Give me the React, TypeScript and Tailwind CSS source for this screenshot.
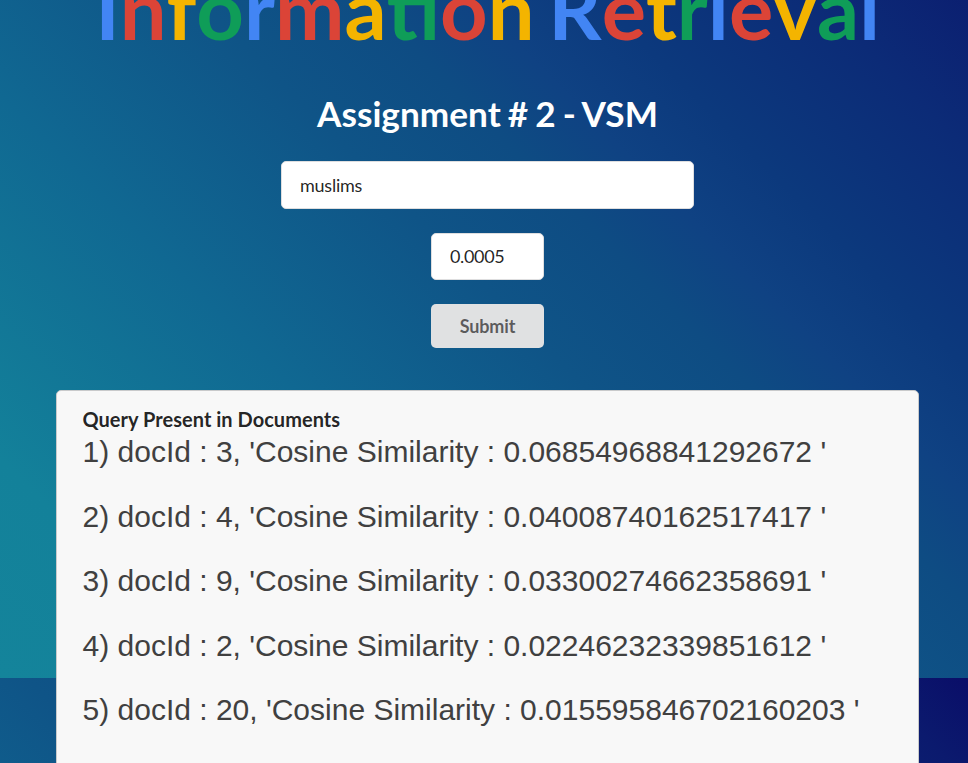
const TITLE = ["Information", "Retrieval"];
const COLORS = ["text-[#4285f4]", "text-[#db4437]", "text-[#f4b400]", "text-[#0f9d58]"];

const RESULTS = [
  { id: 3, score: "0.06854968841292672" },
  { id: 4, score: "0.04008740162517417" },
  { id: 9, score: "0.03300274662358691" },
  { id: 2, score: "0.02246232339851612" },
  { id: 20, score: "0.015595846702160203" },
];

function Title() {
  return (
    <h1 className="-mt-[52px] h-[120px] whitespace-nowrap text-center text-[83px] font-bold leading-[120px] [font-kerning:none] [word-spacing:-6.5px]">
      {TITLE.map((word, w) => (
        <span key={word}>
          {w > 0 && " "}
          {word.split("").map((c, i) => (
            <span key={i} className={COLORS[i % 4]}>{c}</span>
          ))}
        </span>
      ))}
    </h1>
  );
}

export default function App() {
  return (
    <div className="h-[763px] w-[968px] overflow-hidden bg-[linear-gradient(45deg,#14849b_0%,#13819a_12%,#106892_32%,#0f5487_48%,#0e4c83_57%,#0f4283_63%,#0c397d_70%,#0c2b77_82%,#0b1a6e_94%,#0a0d68_100%)] bg-[length:975px_850px] bg-[position:0_-172px] font-[Lato,sans-serif]">
      <div className="flex w-[975px] flex-col items-center">
        <Title />
        <h2 className="mt-[20px] h-[50px] text-[35.2px] font-bold leading-[50px] text-white [word-spacing:-1.5px]">Assignment # 2 - VSM</h2>
        <input
          className="mt-[23px] h-[48px] w-[413px] rounded-[5px] border border-[#dededf] bg-white px-[18px] text-[18px] tracking-[-0.25px] text-black/87 outline-none"
          defaultValue="muslims"
        />
        <input
          className="mt-[24px] h-[47px] w-[113px] rounded-[5px] border border-[#dededf] bg-white px-[18px] pb-px text-[18px] tracking-[-0.35px] text-black/87 outline-none"
          defaultValue="0.0005"
        />
        <button className="mt-[24px] h-[44px] w-[113px] rounded-[5px] bg-[#e0e1e2] pt-px text-[18px] font-bold tracking-[-0.15px] text-black/60">
          Submit
        </button>
        <section className="mt-[42px] h-[500px] w-[863px] rounded-[5px] border border-[#c9cacb] bg-[#f8f8f8] pl-[25.5px] pt-[15px]">
          <h3 className="h-[26px] text-[20px] font-bold leading-[26px] tracking-[0.03px] text-black/87">Query Present in Documents</h3>
          <ol className="font-['Liberation_Sans',Arial,sans-serif] text-[30px] text-[#404040]">
            {RESULTS.map((r, i) => (
              <li key={r.id} className="mb-[24.5px] h-[40px] whitespace-nowrap leading-[40px]">
                {i + 1}) docId : {r.id}, 'Cosine Similarity : {r.score} '
              </li>
            ))}
          </ol>
        </section>
      </div>
    </div>
  );
}
